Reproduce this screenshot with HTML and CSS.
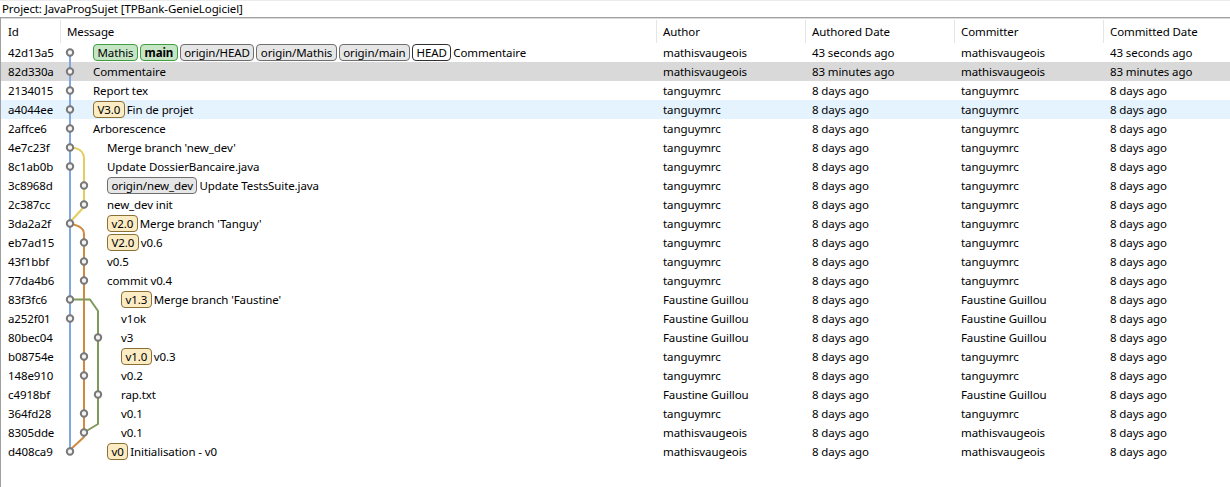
FILE: index.html
```html
<!DOCTYPE html>
<html>
<head>
<meta charset="utf-8">
<link rel="stylesheet" href="styles.css">
</head>
<body>
<div class="title">Project: JavaProgSujet [TPBank-GenieLogiciel]</div>
<div class="grid">
  <div class="head">
    <div class="hc">Id</div>
    <div class="hc sep">Message</div>
    <div class="hc sep">Author</div>
    <div class="hc sep">Authored Date</div>
    <div class="hc sep">Committer</div>
    <div class="hc sep">Committed Date</div>
  </div>
  <div class="rows">
    <svg class="graph" width="130" height="418" viewBox="0 0 130 418">
      <g fill="none" stroke-width="2" stroke-linejoin="round">
        <path d="M70 9.5 V408.5" stroke="#82a7df"/>
        <path d="M70 104.5 C78 104.5 84 108 84 116 V164 L70 179" stroke="#e3cd5f"/>
        <path d="M70 180.5 C76 182 84 184 84 191 V394 L70 407" stroke="#cf8a42"/>
        <path d="M70 256.5 H90 L98 268 V381 L84 389.5" stroke="#7f9a58"/>
      </g>
      <g fill="#f4f4f4" stroke="#787878" stroke-width="2">
        <circle cx="70" cy="9.5" r="3.2"/>
        <circle cx="70" cy="28.5" r="3.2"/>
        <circle cx="70" cy="47.5" r="3.2"/>
        <circle cx="70" cy="66.5" r="3.2"/>
        <circle cx="70" cy="85.5" r="3.2"/>
        <circle cx="70" cy="104.5" r="3.2"/>
        <circle cx="70" cy="123.5" r="3.2"/>
        <circle cx="84" cy="142.5" r="3.2"/>
        <circle cx="84" cy="161.5" r="3.2"/>
        <circle cx="70" cy="180.5" r="3.2"/>
        <circle cx="84" cy="199.5" r="3.2"/>
        <circle cx="84" cy="218.5" r="3.2"/>
        <circle cx="84" cy="237.5" r="3.2"/>
        <circle cx="70" cy="256.5" r="3.2"/>
        <circle cx="70" cy="275.5" r="3.2"/>
        <circle cx="98" cy="294.5" r="3.2"/>
        <circle cx="84" cy="313.5" r="3.2"/>
        <circle cx="84" cy="332.5" r="3.2"/>
        <circle cx="98" cy="351.5" r="3.2"/>
        <circle cx="84" cy="370.5" r="3.2"/>
        <circle cx="84" cy="389.5" r="3.2"/>
        <circle cx="70" cy="408.5" r="3.2"/>
      </g>
    </svg>

    <div class="row"><div class="c">42d13a5</div><div class="c msg l1"><span class="b local">Mathis</span><span class="b local bold">main</span><span class="b remote">origin/HEAD</span><span class="b remote">origin/Mathis</span><span class="b remote">origin/main</span><span class="b head-ref">HEAD</span>Commentaire</div><div class="c">mathisvaugeois</div><div class="c">43 seconds ago</div><div class="c">mathisvaugeois</div><div class="c">43 seconds ago</div></div>
    <div class="row selected"><div class="c">82d330a</div><div class="c msg l1">Commentaire</div><div class="c">mathisvaugeois</div><div class="c">83 minutes ago</div><div class="c">mathisvaugeois</div><div class="c">83 minutes ago</div></div>
    <div class="row"><div class="c">2134015</div><div class="c msg l1">Report tex</div><div class="c">tanguymrc</div><div class="c">8 days ago</div><div class="c">tanguymrc</div><div class="c">8 days ago</div></div>
    <div class="row hover"><div class="c">a4044ee</div><div class="c msg l1"><span class="b tag">V3.0</span>Fin de projet</div><div class="c">tanguymrc</div><div class="c">8 days ago</div><div class="c">tanguymrc</div><div class="c">8 days ago</div></div>
    <div class="row"><div class="c">2affce6</div><div class="c msg l1">Arborescence</div><div class="c">tanguymrc</div><div class="c">8 days ago</div><div class="c">tanguymrc</div><div class="c">8 days ago</div></div>
    <div class="row"><div class="c">4e7c23f</div><div class="c msg l2">Merge branch 'new_dev'</div><div class="c">tanguymrc</div><div class="c">8 days ago</div><div class="c">tanguymrc</div><div class="c">8 days ago</div></div>
    <div class="row"><div class="c">8c1ab0b</div><div class="c msg l2">Update DossierBancaire.java</div><div class="c">tanguymrc</div><div class="c">8 days ago</div><div class="c">tanguymrc</div><div class="c">8 days ago</div></div>
    <div class="row"><div class="c">3c8968d</div><div class="c msg l2"><span class="b remote">origin/new_dev</span>Update TestsSuite.java</div><div class="c">tanguymrc</div><div class="c">8 days ago</div><div class="c">tanguymrc</div><div class="c">8 days ago</div></div>
    <div class="row"><div class="c">2c387cc</div><div class="c msg l2">new_dev init</div><div class="c">tanguymrc</div><div class="c">8 days ago</div><div class="c">tanguymrc</div><div class="c">8 days ago</div></div>
    <div class="row"><div class="c">3da2a2f</div><div class="c msg l2"><span class="b tag">v2.0</span>Merge branch 'Tanguy'</div><div class="c">tanguymrc</div><div class="c">8 days ago</div><div class="c">tanguymrc</div><div class="c">8 days ago</div></div>
    <div class="row"><div class="c">eb7ad15</div><div class="c msg l2"><span class="b tag">V2.0</span>v0.6</div><div class="c">tanguymrc</div><div class="c">8 days ago</div><div class="c">tanguymrc</div><div class="c">8 days ago</div></div>
    <div class="row"><div class="c">43f1bbf</div><div class="c msg l2">v0.5</div><div class="c">tanguymrc</div><div class="c">8 days ago</div><div class="c">tanguymrc</div><div class="c">8 days ago</div></div>
    <div class="row"><div class="c">77da4b6</div><div class="c msg l2">commit v0.4</div><div class="c">tanguymrc</div><div class="c">8 days ago</div><div class="c">tanguymrc</div><div class="c">8 days ago</div></div>
    <div class="row"><div class="c">83f3fc6</div><div class="c msg l3"><span class="b tag">v1.3</span>Merge branch 'Faustine'</div><div class="c">Faustine Guillou</div><div class="c">8 days ago</div><div class="c">Faustine Guillou</div><div class="c">8 days ago</div></div>
    <div class="row"><div class="c">a252f01</div><div class="c msg l3">v1ok</div><div class="c">Faustine Guillou</div><div class="c">8 days ago</div><div class="c">Faustine Guillou</div><div class="c">8 days ago</div></div>
    <div class="row"><div class="c">80bec04</div><div class="c msg l3">v3</div><div class="c">Faustine Guillou</div><div class="c">8 days ago</div><div class="c">Faustine Guillou</div><div class="c">8 days ago</div></div>
    <div class="row"><div class="c">b08754e</div><div class="c msg l3"><span class="b tag">v1.0</span>v0.3</div><div class="c">tanguymrc</div><div class="c">8 days ago</div><div class="c">tanguymrc</div><div class="c">8 days ago</div></div>
    <div class="row"><div class="c">148e910</div><div class="c msg l3">v0.2</div><div class="c">tanguymrc</div><div class="c">8 days ago</div><div class="c">tanguymrc</div><div class="c">8 days ago</div></div>
    <div class="row"><div class="c">c4918bf</div><div class="c msg l3">rap.txt</div><div class="c">Faustine Guillou</div><div class="c">8 days ago</div><div class="c">Faustine Guillou</div><div class="c">8 days ago</div></div>
    <div class="row"><div class="c">364fd28</div><div class="c msg l3">v0.1</div><div class="c">tanguymrc</div><div class="c">8 days ago</div><div class="c">tanguymrc</div><div class="c">8 days ago</div></div>
    <div class="row"><div class="c">8305dde</div><div class="c msg l3">v0.1</div><div class="c">mathisvaugeois</div><div class="c">8 days ago</div><div class="c">mathisvaugeois</div><div class="c">8 days ago</div></div>
    <div class="row"><div class="c">d408ca9</div><div class="c msg l2"><span class="b tag">v0</span>Initialisation - v0</div><div class="c">mathisvaugeois</div><div class="c">8 days ago</div><div class="c">mathisvaugeois</div><div class="c">8 days ago</div></div>
  </div>
</div>
</body>
</html>
```

FILE: styles.css
```css
html, body {
  margin: 0;
  padding: 0;
}
body {
  width: 1230px;
  height: 487px;
  overflow: hidden;
  background: #fff;
  color: #000;
  font-family: "Noto Sans", "Open Sans", sans-serif;
  font-size: 11.5px;
  letter-spacing: -0.1px;
}
.title {
  height: 17px;
  box-sizing: border-box;
  line-height: 16px;
  padding-left: 2px;
  border-top: 1px solid #ececec;
  white-space: nowrap;
}
.grid {
  border-top: 1px solid #a0a0a0;
  border-left: 1px solid #a0a0a0;
  height: 470px;
  box-sizing: border-box;
}
.head {
  display: grid;
  grid-template-columns: 59px 596px 149px 149px 149px 1fr;
  height: 25px;
  box-sizing: border-box;
  border-top: 1px solid #dcdcdc;
}
.hc {
  margin-top: 1px;
  height: 23px;
  line-height: 23px;
  padding-left: 7px;
  white-space: nowrap;
}
.hc.sep {
  border-left: 1px solid #e5e5e5;
  padding-left: 6px;
}
.rows {
  position: relative;
}
.graph {
  position: absolute;
  left: -1px;
  top: 0;
  z-index: 1;
  pointer-events: none;
}
.row {
  display: grid;
  grid-template-columns: 59px 596px 149px 149px 149px 1fr;
  height: 19px;
  line-height: 19px;
}
.row.selected {
  background: #d9d9d9;
}
.row.hover {
  background: #e5f3ff;
}
.c {
  padding-left: 7px;
  white-space: nowrap;
  overflow: hidden;
}
.msg {
  display: flex;
  align-items: center;
}
.msg.l1 { padding-left: 33px; }
.msg.l2 { padding-left: 47px; }
.msg.l3 { padding-left: 61px; }
.b {
  display: inline-flex;
  align-items: center;
  height: 17px;
  box-sizing: border-box;
  padding: 0 3.5px;
  margin-right: 2px;
  border: 1px solid #707070;
  border-radius: 4px;
  line-height: 15px;
}
.b.local {
  background: #c5e5c5;
  border-color: #3f9e3f;
}
.b.bold {
  font-weight: bold;
}
.b.remote {
  background: #e6e6e6;
  border-color: #6f6f6f;
}
.b.head-ref {
  background: #fff;
  border-color: #303030;
}
.b.tag {
  background: #fcecc4;
  border-color: #8a7035;
}
```
